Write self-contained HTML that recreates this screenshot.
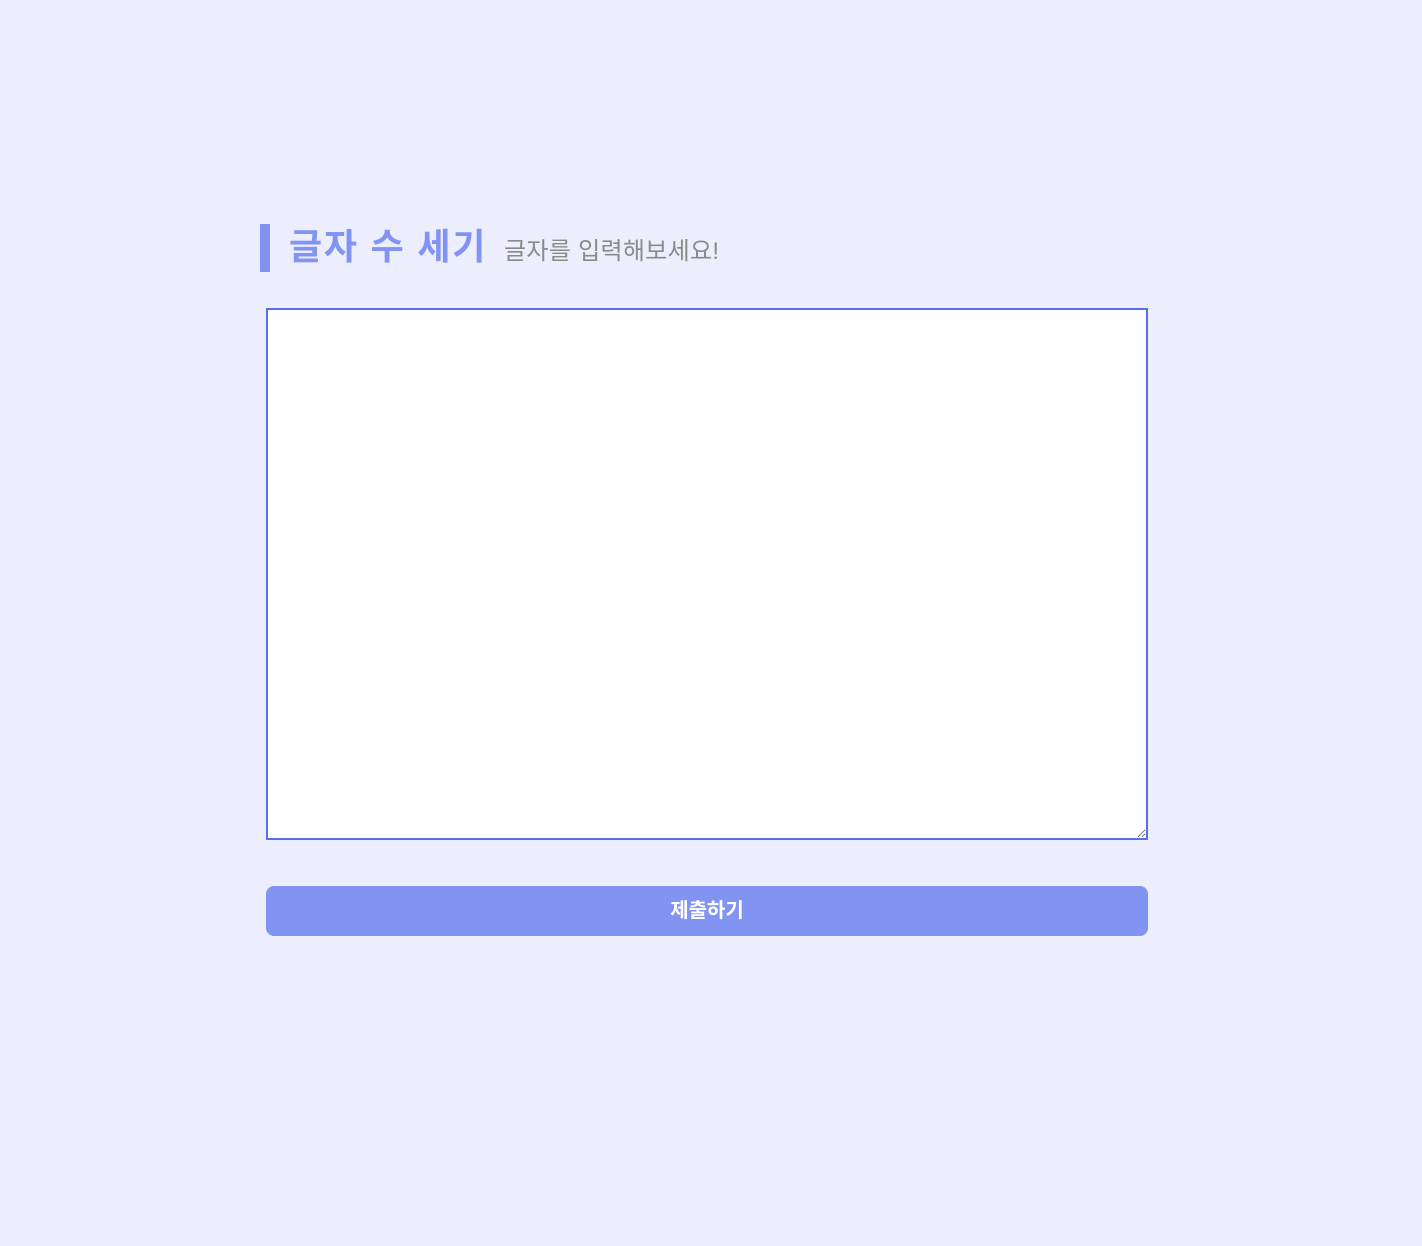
<!DOCTYPE html>
<html><head><meta charset="utf-8"><style>
html,body{margin:0;padding:0;background:#eceefd;width:1422px;height:1246px;overflow:hidden;font-family:"Liberation Sans","Noto Sans CJK KR",sans-serif}
.bar{position:absolute;left:260px;top:224px;width:10px;height:48px;background:#8193f3}
.t{position:absolute;left:289px;top:223px;font-size:36px;font-weight:bold;color:#8193f3;line-height:48px;white-space:nowrap;letter-spacing:1.8px}
.s{position:absolute;left:504px;top:234px;font-size:24px;color:#8a8a8a;line-height:36px;white-space:nowrap;letter-spacing:0.3px}
textarea{position:absolute;left:266px;top:308px;width:882px;height:532px;box-sizing:border-box;border:2px solid #5c6cf0;background:#fff;margin:0;outline:none}
.btn{position:absolute;left:266px;top:886px;width:882px;height:50px;border-radius:8px;background:#8294f2;color:#fff;font-size:20px;font-weight:bold;text-align:center;line-height:50px}
</style></head><body>
<div class="bar"></div>
<div class="t">글자 수 세기</div>
<div class="s">글자를 입력해보세요!</div>
<textarea></textarea>
<div class="btn">제출하기</div>
</body></html>
